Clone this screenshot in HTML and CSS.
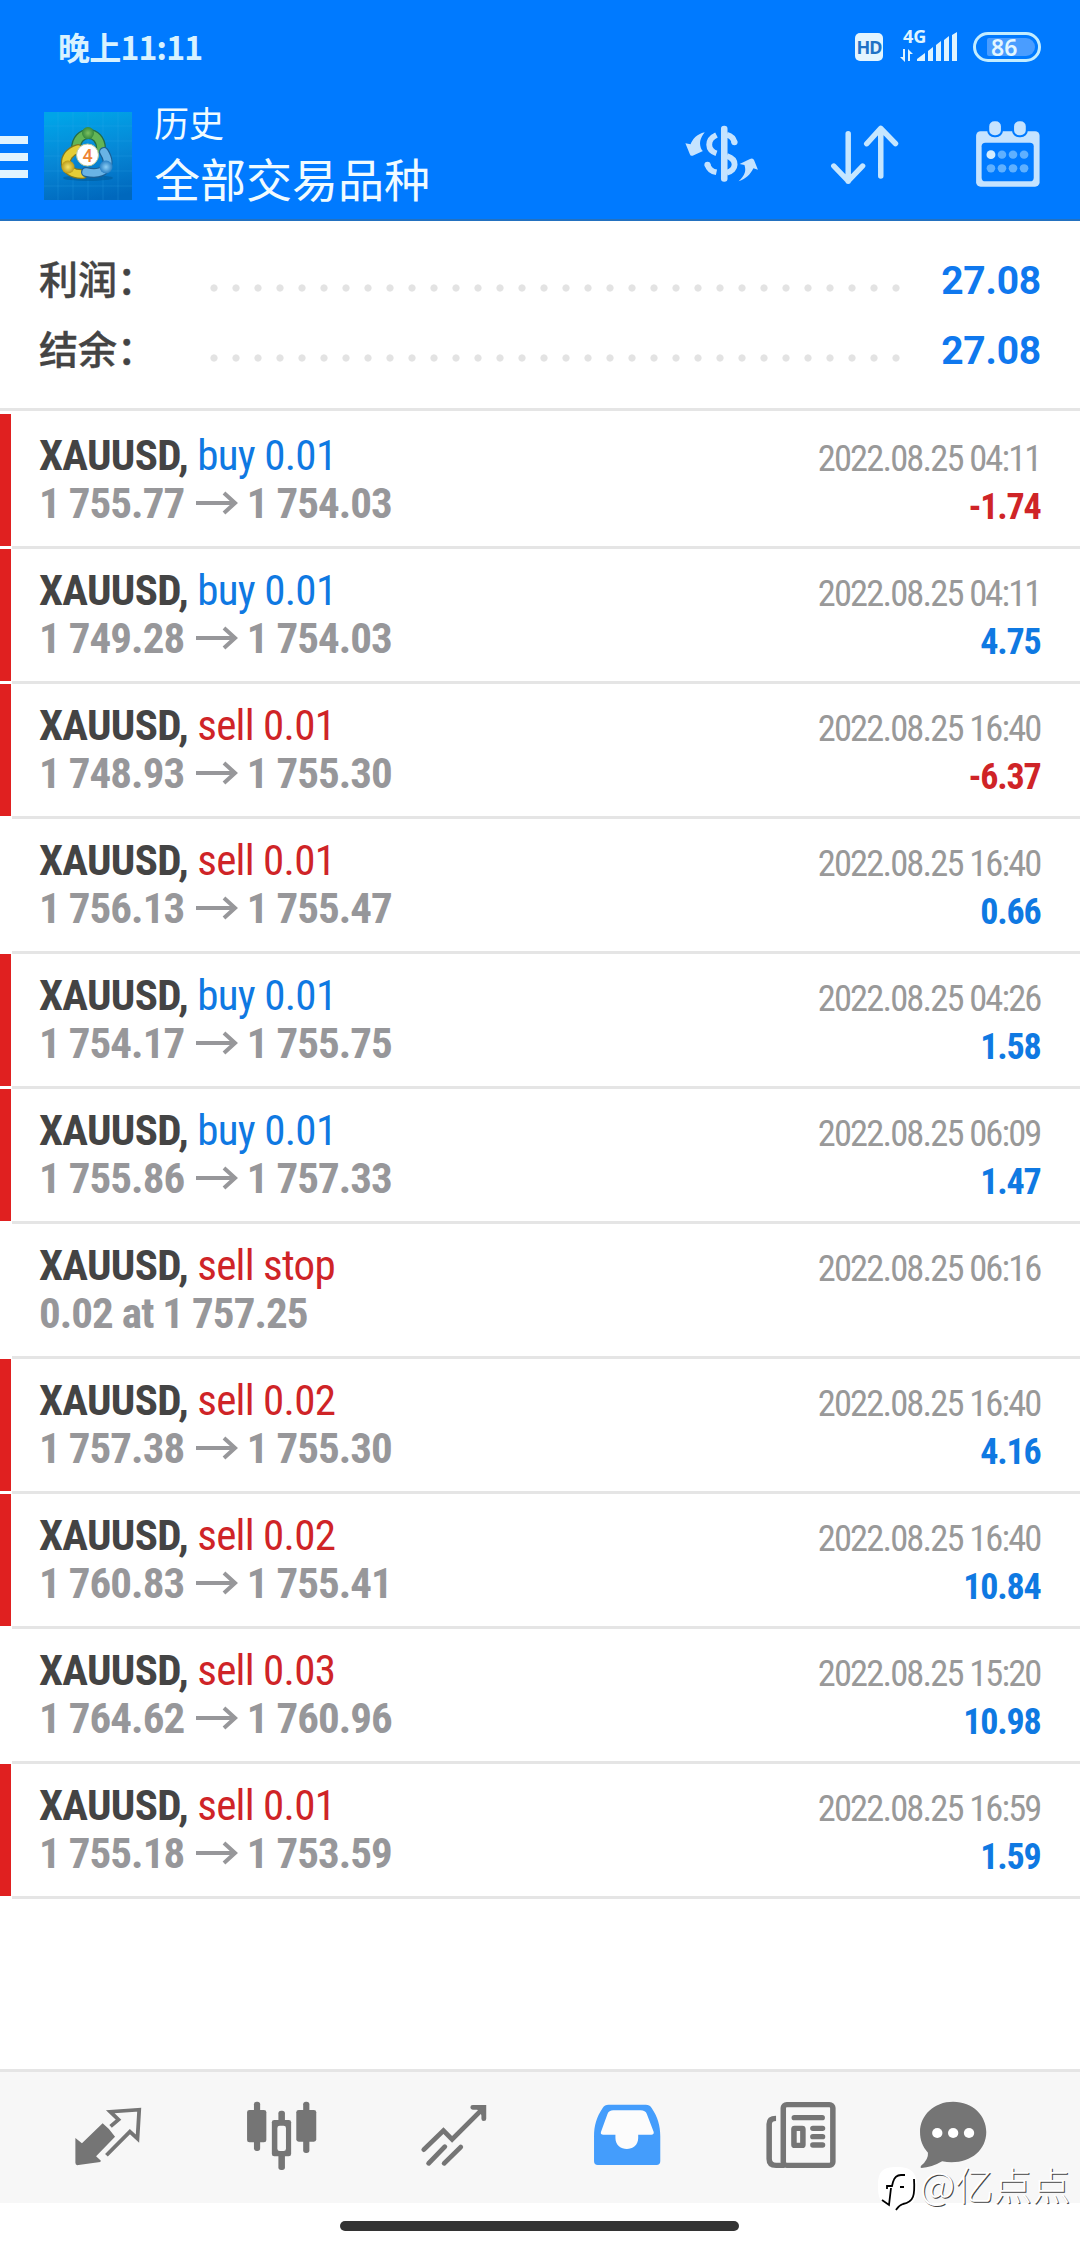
FILE: index.html
```
<!DOCTYPE html>
<html lang="zh-CN">
<head>
<meta charset="utf-8">
<title>历史</title>
<link rel="stylesheet" href="styles.css">
<script src="rows.js" defer></script>
</head>
<body>
<header class="header">
  <div class="status">
    <span class="clock">晚上11:11</span>
    <span class="hd">HD</span>
    <svg class="signal" width="60" height="52" viewBox="898 21 60 52">
      <text class="net" x="903" y="42.500" textLength="23.500" lengthAdjust="spacingAndGlyphs">4G</text>
      <path fill="#dff4ff" d="M917 61v-2l8-6v8zM928 61V51l5-4v14zM936 61V45l5-4v20zM944 61V40l5-4v25zM952 61V35l5-3v29zM903 49h2v13l-5-5h3zM908 61V49l5 5h-3v7z"/>
    </svg>
    <span class="battery"><span class="charge">86</span></span>
  </div>
  <div class="toolbar">
    <div class="menu"><i></i><i></i><i></i></div>
    <svg class="logo" width="88" height="88" viewBox="0 0 88 88">
      <defs>
        <linearGradient id="sky" x1=".4" y1="0" x2=".6" y2="1"><stop offset="0" stop-color="#00a4e8"/><stop offset=".5" stop-color="#0687d6"/><stop offset="1" stop-color="#0068bd"/></linearGradient>
        <radialGradient id="green"><stop offset="0" stop-color="#7cc060"/><stop offset="1" stop-color="#35893c"/></radialGradient>
        <radialGradient id="gold"><stop offset="0" stop-color="#f3e46a"/><stop offset="1" stop-color="#b99a1a"/></radialGradient>
        <radialGradient id="blue"><stop offset="0" stop-color="#8fd0f6"/><stop offset="1" stop-color="#2a80c4"/></radialGradient>
      </defs>
      <path fill="url(#sky)" d="M0 0h88v88H0z"/>
      <path stroke="#35b0ee" stroke-opacity=".22" fill="none" d="M0 14h88M0 29h88M0 44h88M0 59h88M0 74h88M14 0v88M29 0v88M44 0v88M59 0v88M74 0v88"/>
      <ellipse cx="44" cy="66" rx="25" ry="3" fill="#00558f" opacity=".5"/>
      <g fill="none" stroke-linecap="round">
        <path stroke="#236c48" stroke-width="10" d="M32 37c0-20 25-20 25 0"/><path stroke="#63b556" stroke-width="7.500" d="M32 37c0-20 25-20 25 0"/>
        <path stroke="#807821" stroke-width="10" d="M34 37c-17 5-17 26 5 25"/><path stroke="#e5cd37" stroke-width="7.500" d="M34 37c-17 5-17 26 5 25"/>
        <path stroke="#1b5f95" stroke-width="10" d="M60 40c9 14 0 24-18 20"/><path stroke="#69b3e5" stroke-width="7.500" d="M60 40c9 14 0 24-18 20"/>
      </g>
      <circle cx="44" cy="21" r="6" fill="url(#green)"/><circle cx="24" cy="55" r="6.500" fill="url(#gold)"/><circle cx="62" cy="55" r="6.500" fill="url(#blue)"/>
      <circle cx="43.500" cy="43" r="11" fill="#fff" stroke="#b9c69a"/>
      <text class="four" x="43.500" y="49.500" text-anchor="middle">4</text>
    </svg>
    <div class="titles"><div class="small">历史</div><div class="large">全部交易品种</div></div>
    <svg class="tool currency" width="76" height="73.300" viewBox="420 350 220 220" preserveAspectRatio="none">
      <g fill="#c5e3ff">
        <rect x="527" y="376" width="19" height="168" rx="9"/>
        <path d="M480 396c-14 18-18 35-8 54l3 2-30 14q-6 2-8-4l-13-33 15 3c5-14 18-31 41-36zM578 543c20-20 22-32 17-49l-14-3 30-15q9-4 12 4l11 28-13-4c-8 17-21 32-43 39z"/>
        <circle cx="488" cy="493" r="9"/><circle cx="566" cy="426" r="9"/>
      </g>
      <g fill="none" stroke="#c5e3ff" stroke-width="17">
        <path d="M514 404c-29 14-27 46 0 55M514 516c-15-3-23-12-26-23M544 403c14 4 20 12 22 23M544 467c31 10 29 43 0 50"/>
      </g>
    </svg>
    <svg class="tool sort" width="72" height="73.300" viewBox="840 350 210 220" preserveAspectRatio="none" fill="none" stroke="#c5e6ff" stroke-width="16" stroke-linecap="round" stroke-linejoin="round">
      <path d="M896 400v143M854 497l42 45 42-45M991 527V384M950 430l41-46 43 46"/>
    </svg>
    <svg class="tool calendar" width="69" height="73.300" viewBox="1260 350 200 220" preserveAspectRatio="none">
      <rect x="1269" y="393" width="184" height="166" rx="13" fill="#c5e3ff"/>
      <rect x="1285" y="427" width="151" height="116" rx="11" fill="#007aff"/>
      <g fill="#c5e3ff" stroke="#007aff" stroke-width="6"><rect x="1304" y="360" width="40" height="48" rx="18"/><rect x="1376" y="360" width="40" height="48" rx="18"/></g>
      <g fill="#5fb0ff"><circle cx="1312" cy="463" r="13" fill="#d3edff"/><circle cx="1344" cy="463" r="12.500"/><circle cx="1376" cy="463" r="12.500"/><circle cx="1408" cy="463" r="12.500"/><circle cx="1312" cy="504" r="12.500"/><circle cx="1344" cy="504" r="12.500"/><circle cx="1376" cy="504" r="12.500"/><circle cx="1408" cy="504" r="12.500"/></g>
    </svg>
  </div>
</header>
<section class="summary">
  <div class="sum"><span class="label">利润：</span><span class="dots"></span><b>27.08</b></div>
  <div class="sum"><span class="label">结余：</span><span class="dots"></span><b>27.08</b></div>
</section>
<main class="deals" id="deals"></main>
<nav class="tabs">
  <svg class="tab trade" width="69" height="71.700" viewBox="215 150 200 215" preserveAspectRatio="none">
    <path fill="#757575" d="M219 264l19 16 60-60q20 16 36 40l-55 59 14 13-2 4-63 9q-9 2-9-7z"/>
    <path fill="none" stroke="#757575" stroke-width="11" d="M321 229l23-20-24-24 84-6-5 87-22-21-68 71"/>
  </svg>
  <svg class="tab charts" width="72.300" height="71.700" viewBox="710 150 210 215" preserveAspectRatio="none" fill="#757575">
    <rect x="736" y="155" width="18" height="148" rx="8"/><rect x="716" y="180" width="56" height="97" rx="7"/>
    <rect x="879" y="155" width="18" height="154" rx="8"/><rect x="859" y="180" width="58" height="95" rx="7"/>
    <rect x="807" y="182" width="19" height="178" rx="8"/><rect x="788" y="210" width="56" height="109" rx="7"/><rect x="804" y="227" width="25" height="76" rx="7" fill="#f7f7f7"/>
  </svg>
  <svg class="tab trend" width="69" height="71.700" viewBox="1220 150 200 215" preserveAspectRatio="none" fill="none" stroke="#757575" stroke-width="14" stroke-linecap="round">
    <path d="M1231 299l57-57 25 26 90-93M1373 172h32v34M1245 340l47-50M1290 340l48-49"/>
    <path fill="#757575" stroke="none" d="M1380 170h28v38z"/>
  </svg>
  <svg class="tab history" width="69" height="71.700" viewBox="155 150 200 215" preserveAspectRatio="none">
    <path fill="#449dfc" d="M200 164h108q11 0 17 10c18 27 25 54 25 85v75q0 11-11 11H169q-11 0-11-11v-75c0-31 7-58 25-85q6-10 17-10z"/>
    <path fill="#fcfcfc" d="M214 181h79q14 0 18 11l20 54q1 8-7 8h-38v10c0 44-66 44-66 0v-10h-35q-9 0-7-8l19-54q4-11 17-11z"/>
  </svg>
  <svg class="tab news" width="72.300" height="71.700" viewBox="650 150 210 215" preserveAspectRatio="none" fill="none" stroke="#757575" stroke-width="16">
    <rect x="706" y="164" width="144" height="182" rx="10"/><path d="M685 205q-20 0-20 17v105q0 19 20 19h25"/>
    <path stroke-linecap="round" d="M738 203h81M792 235h28M792 260h28M792 285h28"/>
    <rect x="737" y="235" width="26" height="51" rx="2"/>
  </svg>
  <svg class="tab chat" width="69" height="71.700" viewBox="1100 150 200 215" preserveAspectRatio="none">
    <path fill="#757575" d="M1199 155c57 0 96 42 96 91 0 61-57 102-128 88-20 12-40 19-60 20q-5-2-1-7 22-19 20-39c-16-19-23-38-23-62 0-50 40-91 96-91z"/>
    <g fill="#fff"><circle cx="1153" cy="249" r="15"/><circle cx="1199" cy="249" r="15"/><circle cx="1245" cy="249" r="15"/></g>
  </svg>
</nav>
<footer class="gesture"><span></span></footer>
<div class="watermark">
  <svg width="40" height="46" viewBox="0 0 40 46">
    <path fill="#fff" d="M19 0c16 0 20 7 20 20s-3 18-13 19c-5 0-6 3-8 5v-5C3 39 0 33 0 19S4 0 19 0z"/>
    <path fill="none" stroke="#000" stroke-width="1.800" d="M27 8h-4q-6 0-8 7l-1 4H9v3M13 21l-2 17-7-5M22 20h4M36 12c1 16 0 23-11 25-4 1-5 3-7 6"/>
  </svg>
  <span class="handle">@亿点点</span>
</div>
</body>
</html>
```
FILE: styles.css
```
* { box-sizing: border-box; }
body { margin: 0; width: 1080px; height: 2248px; display: flex; flex-direction: column; background: #fff; font-family: Roboto, "Noto Sans CJK SC", sans-serif; position: relative; overflow: hidden; }
.header { height: 221px; background: #007aff; border-bottom: 2px solid #2371c0; flex: none; color: #f0fbff; }
.status { height: 94px; display: flex; align-items: center; padding: 0 39px 0 58px; color: #d8f2ff; }
.clock { font: 700 32px/40px "Noto Sans CJK SC", sans-serif; letter-spacing: -0.8px; margin: -2px auto 0 0; }
.hd { width: 28px; height: 28px; border-radius: 5px; background: #e3f5ff; color: #1f72c5; font: 700 18px/29px "Noto Sans", sans-serif; letter-spacing: -1px; display: flex; justify-content: center; margin-right: 15px; }
.signal { margin-right: 15px; display: block; }
.net { font: 700 17px "Noto Sans", sans-serif; fill: #dff4ff; }
.battery { width: 68px; height: 30px; border: 3px solid #c3edff; border-radius: 15px; padding: 3px 3px 3px 11px; display: flex; }
.charge { flex: 1; background: #4a9dff; border-radius: 2px 9px 9px 2px; font: 600 23px/19px "Noto Sans", sans-serif; padding-left: 4px; color: #e3f7ff; }
.toolbar { display: flex; align-items: flex-start; padding-top: 2px; height: 125px; }
.menu { width: 28px; margin: 40px 16px 0 0; display: grid; gap: 9px; }
.menu i { height: 8px; background: #e0f4ff; }
.logo { margin-top: 16px; flex: none; }
.four { font: 500 18px Roboto, sans-serif; fill: #ee8434; }
.titles { margin-left: 22px; width: 509px; font-family: "Noto Sans CJK SC", sans-serif; }
.small { font-size: 35px; line-height: 50px; padding-top: 1px; }
.large { font-size: 46px; line-height: 60px; }
.tool { margin-top: 20.700px; flex: none; }
.currency { margin-left: 21px; }
.sort { margin-left: 69px; }
.calendar { margin-left: 72px; }
.summary { height: 190px; flex: none; border-bottom: 3px solid #e5e5e5; padding-top: 25px; }
.sum { display: flex; height: 70px; align-items: center; padding: 0 39px; }
.label { font: 500 39px/60px "Noto Sans CJK SC", sans-serif; color: #444; -webkit-text-stroke: 0.4px #444; width: 164px; margin-bottom: 9px; white-space: nowrap; }
.dots { width: 704px; height: 8px; margin-top: 13px; background: radial-gradient(circle at 11px 4px, #e3e3e3 3.200px, transparent 4px) 0 0 / 22px 8px; }
.sum b { margin-left: auto; font-size: 39px; letter-spacing: -0.2px; color: #0f78ee; }
.deals { flex: 1; padding-top: 3px; }
.deal { height: 135px; display: flex; }
.mark { width: 11px; height: 132px; margin-right: 1px; }
.mark.on { background: #e02020; }
.body { flex: 1; border-bottom: 3px solid #e5e5e5; display: flex; justify-content: space-between; padding: 17px 39.500px 0 27px; font-stretch: 75%; font-size: 43px; line-height: 48px; white-space: nowrap; }
.title { letter-spacing: -0.7px; }
.sym { color: #444; font-weight: 700; }
.buy { color: #0f79e2; }
.sell { color: #cf2427; }
.price { color: #97979a; font-weight: 700; letter-spacing: -0.95px; display: flex; align-items: center; }
.price svg { margin: 0 8.500px 0 12px; }
.right { text-align: right; font-size: 36.500px; color: #999; padding-top: 4px; letter-spacing: -1.850px; }
.gain, .loss { font-size: 36px; font-weight: 700; letter-spacing: -1.200px; }
.gain { color: #0f79e2; }
.loss { color: #cf2427; }
.tabs { height: 134px; flex: none; background: #f7f7f7; border-top: 3px solid #e5e5e5; display: flex; padding: 28px 0 0 74px; }
.charts { margin-left: 101.500px; }
.trend { margin-left: 103.300px; }
.history { margin-left: 104.400px; }
.news { margin-left: 101.500px; }
.chat { margin-left: 82.700px; }
.gesture { height: 45px; flex: none; padding: 18px 0 0 340px; }
.gesture span { display: block; width: 399px; height: 10px; border-radius: 5px; background: #333; }
.watermark { position: absolute; left: 878px; top: 2167px; display: flex; align-items: flex-start; gap: 2px; }
.handle { color: #fff; font: 300 38.500px/40px "Noto Sans CJK SC", sans-serif; margin-top: -4px; text-shadow: 1px 1px 0 #444; white-space: nowrap; }
```
FILE: rows.js
```
const deals = [
  [1, "buy", "0.01", "1 755.77", "1 754.03", "2022.08.25 04:11", "-1.74"],
  [1, "buy", "0.01", "1 749.28", "1 754.03", "2022.08.25 04:11", "4.75"],
  [1, "sell", "0.01", "1 748.93", "1 755.30", "2022.08.25 16:40", "-6.37"],
  [0, "sell", "0.01", "1 756.13", "1 755.47", "2022.08.25 16:40", "0.66"],
  [1, "buy", "0.01", "1 754.17", "1 755.75", "2022.08.25 04:26", "1.58"],
  [1, "buy", "0.01", "1 755.86", "1 757.33", "2022.08.25 06:09", "1.47"],
  [0, "sell", "stop", "0.02 at 1 757.25", "", "2022.08.25 06:16", ""],
  [1, "sell", "0.02", "1 757.38", "1 755.30", "2022.08.25 16:40", "4.16"],
  [1, "sell", "0.02", "1 760.83", "1 755.41", "2022.08.25 16:40", "10.84"],
  [0, "sell", "0.03", "1 764.62", "1 760.96", "2022.08.25 15:20", "10.98"],
  [1, "sell", "0.01", "1 755.18", "1 753.59", "2022.08.25 16:59", "1.59"]
];
const arrow = '<svg width="42" height="24" viewBox="0 0 42 24" fill="none" stroke="#97979a" stroke-width="4"><path d="M0 12h39M28 2l11 10-11 10"/></svg>';
document.getElementById("deals").innerHTML = deals.map(([mark, side, vol, from, to, date, pl]) => `
<div class="deal"><div class="mark${mark ? " on" : ""}"></div><div class="body">
<div><div class="title"><span class="sym">XAUUSD,</span> <span class="${side}">${side} ${vol}</span></div>
<div class="price">${from}${to ? arrow + to : ""}</div></div>
<div class="right"><div>${date}</div><div class="${pl[0] === "-" ? "loss" : "gain"}">${pl}</div></div>
</div></div>`).join("");
```
